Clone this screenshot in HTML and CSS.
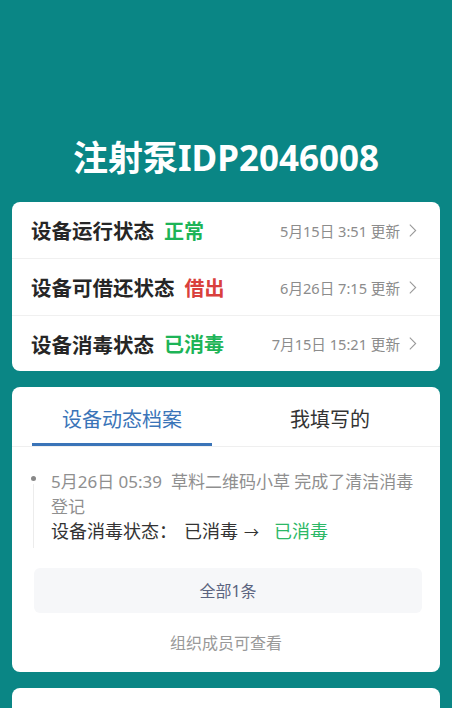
FILE: index.html
```html
<!DOCTYPE html>
<html lang="zh">
<head>
<meta charset="utf-8">
<link rel="stylesheet" href="styles.css">
</head>
<body>
<div class="page">
  <header class="header">
    <h1 class="title">注射泵IDP2046008</h1>
  </header>

  <section class="card status-card">
    <div class="status-row">
      <span class="label">设备运行状态</span>
      <span class="state green">正常</span>
      <span class="meta">5月15日 3:51 更新</span>
      <svg class="chev" viewBox="0 0 10 16" width="9" height="15"><path d="M2 1.5l6.5 6.5-6.5 6.5" fill="none" stroke="#999" stroke-width="1.2"/></svg>
    </div>
    <div class="status-row">
      <span class="label">设备可借还状态</span>
      <span class="state red">借出</span>
      <span class="meta">6月26日 7:15 更新</span>
      <svg class="chev" viewBox="0 0 10 16" width="9" height="15"><path d="M2 1.5l6.5 6.5-6.5 6.5" fill="none" stroke="#999" stroke-width="1.2"/></svg>
    </div>
    <div class="status-row">
      <span class="label">设备消毒状态</span>
      <span class="state green">已消毒</span>
      <span class="meta">7月15日 15:21 更新</span>
      <svg class="chev" viewBox="0 0 10 16" width="9" height="15"><path d="M2 1.5l6.5 6.5-6.5 6.5" fill="none" stroke="#999" stroke-width="1.2"/></svg>
    </div>
  </section>

  <section class="card log-card">
    <div class="tabs">
      <div class="tab active">设备动态档案</div>
      <div class="tab">我填写的</div>
    </div>
    <div class="timeline">
      <div class="entry">
        <p class="entry-head">5月26日 05:39&nbsp; 草料二维码小草 完成了清洁消毒登记</p>
        <p class="entry-body"><span>设备消毒状态：</span><span class="old">已消毒</span><span class="arrow">→</span><span class="green-light">已消毒</span></p>
      </div>
    </div>
    <div class="more">全部1条</div>
    <div class="note">组织成员可查看</div>
  </section>

  <section class="card next-card"></section>
</div>
</body>
</html>
```

FILE: styles.css
```css
* { box-sizing: border-box; }
html, body { margin: 0; padding: 0; }
body {
  background: #0a8685;
  font-family: "Noto Sans", "Noto Sans CJK SC", sans-serif;
  width: 452px;
  height: 708px;
  overflow: hidden;
}
.page { padding: 0 12px; }
.header {
  padding-top: 136px;
  height: 202px;
}
.title {
  margin: 0;
  text-align: center;
  color: #fff;
  font-size: 35px;
  line-height: 44px;
  font-weight: 700;
}
.card {
  background: #fff;
  border-radius: 8px;
}
.status-row {
  display: flex;
  align-items: center;
  height: 57px;
  padding: 0 23px 0 19px;
  border-bottom: 1px solid #f0f0f0;
}
.status-row:last-child { border-bottom: none; height: 55px; }
.label {
  font-size: 20.5px;
  font-weight: 700;
  color: #262626;
}
.state {
  font-size: 20px;
  font-weight: 700;
  margin-left: 10px;
}
.green { color: #1db457; }
.red { color: #d9403c; }
.meta {
  margin-left: auto;
  font-size: 14.6px;
  color: #8c8c8c;
}
.chev { margin-left: 8px; }

.log-card {
  margin-top: 16px;
  padding-bottom: 18px;
}
.tabs {
  display: flex;
  justify-content: space-between;
  padding: 0 20px;
  height: 60px;
  border-bottom: 1px solid #efefef;
}
.tab {
  width: 180px;
  text-align: center;
  font-size: 20px;
  line-height: 28px;
  padding-top: 19px;
  color: #333;
}
.tab.active {
  color: #3a74b8;
  border-bottom: 3px solid #3a74b8;
}
.timeline {
  padding: 23px 20px 0 21px;
}
.entry {
  position: relative;
  padding-left: 18px;
  padding-bottom: 4px;
}
.entry::before {
  content: "";
  position: absolute;
  left: -2px;
  top: 6px;
  width: 5px;
  height: 5px;
  border-radius: 50%;
  background: #888;
}
.entry::after {
  content: "";
  position: absolute;
  left: 0;
  top: 14px;
  bottom: 0;
  width: 1px;
  background: #ececec;
}
.entry p { margin: 0; font-size: 17px; line-height: 24.5px; }
.entry-head { color: #8f8f8f; }
.entry-body {
  color: #333;
  display: flex;
  align-items: baseline;
  height: 24.5px;
}
.entry-body span { font-size: 18px; line-height: 24.5px; }
.entry-body .old { margin-left: 7px; }
.entry-body .arrow { font-size: 15px; margin-left: 6px; }
.green-light { color: #2cb866; margin-left: 15px; }
.more {
  margin: 20px 18px 0 22px;
  height: 45px;
  border-radius: 6px;
  background: #f6f7f9;
  color: #5b6480;
  font-size: 16px;
  display: flex;
  align-items: center;
  justify-content: center;
}
.note {
  margin-top: 19px;
  text-align: center;
  font-size: 16px;
  color: #999;
  line-height: 22px;
}
.next-card {
  margin-top: 16px;
  height: 60px;
}
```
